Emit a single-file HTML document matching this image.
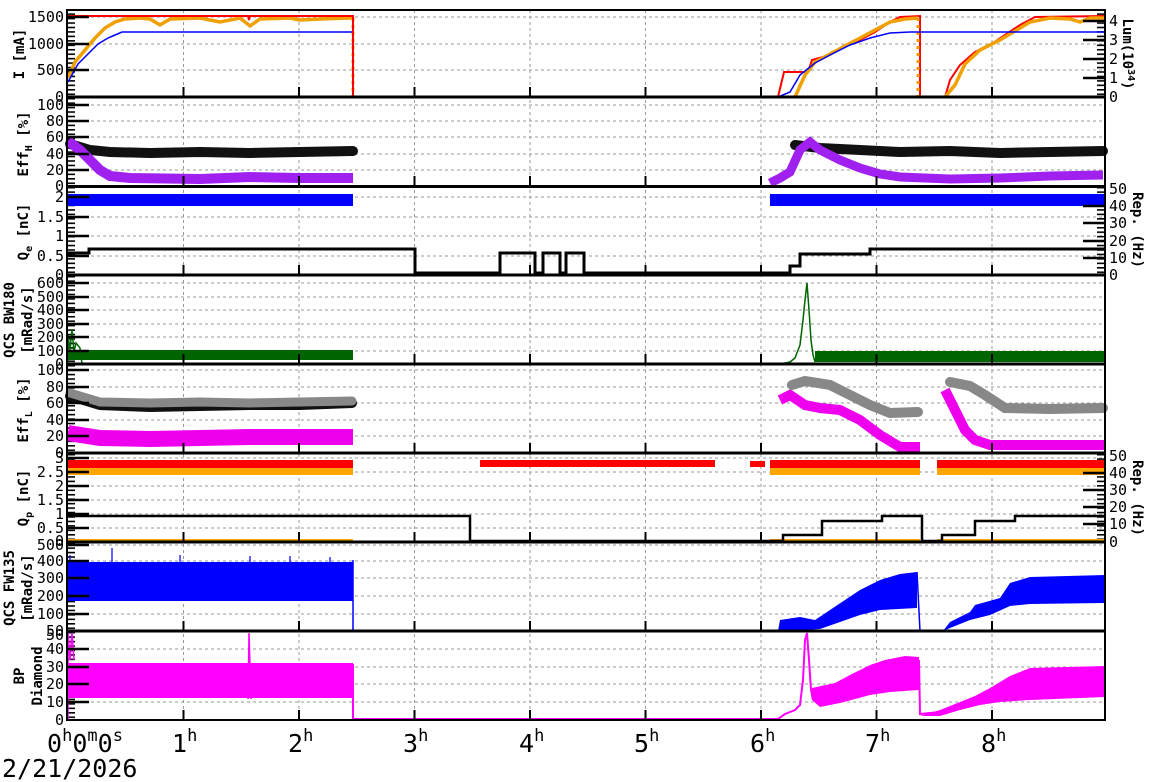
<!DOCTYPE html>
<html><head><meta charset="utf-8"><style>
html,body{margin:0;padding:0;background:#fff;width:1172px;height:782px;overflow:hidden}
svg{display:block}
text{font-family:"DejaVu Sans Mono","Liberation Mono",monospace;fill:#000}
.t{font-size:15px}
.ti{font-size:14px;font-weight:bold}
.b{font-size:25px}
.g{stroke:#999;stroke-width:1;stroke-dasharray:3,3;fill:none}
</style></head><body>
<svg width="1172" height="782" viewBox="0 0 1172 782" xmlns="http://www.w3.org/2000/svg">
<defs>
<pattern id="mt" width="10" height="4.45" patternUnits="userSpaceOnUse"><rect x="0" y="0" width="10" height="1.6" fill="#000"/></pattern>
</defs>
<g class="g">
<path d="M183.5 10V720M299 10V720M414.5 10V720M530 10V720M645.5 10V720M761 10V720M876.5 10V720M992 10V720"/>
<path d="M67 17H1105M67 44H1105M67 70H1105
M67 105H1105M67 121H1105M67 137H1105M67 154H1105M67 170H1105
M67 197H1105M67 217H1105M67 236H1105M67 256H1105
M67 283H1105M67 297H1105M67 310H1105M67 324H1105M67 337H1105M67 351H1105
M67 370H1105M67 387H1105M67 403H1105M67 420H1105M67 436H1105
M67 458H1105M67 472H1105M67 486H1105M67 500H1105M67 514H1105M67 528H1105
M67 545H1105M67 561H1105M67 578H1105M67 596H1105M67 614H1105
M67 649H1105M67 667H1105M67 684H1105M67 702H1105"/>
</g>
<rect x="67" y="10" width="8" height="710" fill="url(#mt)"/>
<rect x="1097" y="10" width="8" height="88" fill="url(#mt)"/>
<rect x="1097" y="186" width="8" height="89" fill="url(#mt)"/>
<rect x="1097" y="453" width="8" height="89" fill="url(#mt)"/>

<!-- PANEL 1 -->
<polyline fill="none" stroke="#f0a000" stroke-width="3.5" points="68,78 75,62 85,50 95,38 105,28 115,22 125,19 140,18 150,19 160,25 170,19 200,18 220,22 240,18 250,26 260,19 290,18 300,20 320,19 350,18 353,18"/>
<line x1="353" y1="18" x2="353" y2="97" stroke="#f0a000" stroke-width="3" stroke-dasharray="3,4"/>
<polyline fill="none" stroke="#00f" stroke-width="1.5" points="68,82 78,64 88,54 98,44 108,38 115,35 122,32 353,32 353,97"/>
<polyline fill="none" stroke="#f00" stroke-width="2" points="68,16 248,16 249,20 250,16 353,16 353,97 778,97 784,72 808,72 812,60 830,55 845,45 860,40 875,32 890,22 900,17 920,16 920,97 945,97 950,80 960,65 975,52 990,45 1005,35 1020,25 1035,17 1105,16"/>
<polyline fill="none" stroke="#f0a000" stroke-width="3.5" points="795,97 805,75 815,62 830,54 845,46 860,38 875,30 890,22 905,19 918,18"/>
<line x1="918" y1="18" x2="918" y2="97" stroke="#f0a000" stroke-width="3" stroke-dasharray="3,4"/>
<polyline fill="none" stroke="#f0a000" stroke-width="3.5" points="945,97 955,85 965,64 980,50 1000,40 1015,31 1030,22 1050,18 1070,19 1080,22 1090,18 1105,18"/>
<polyline fill="none" stroke="#00f" stroke-width="1.5" points="778,97 790,92 800,75 815,63 830,55 850,45 870,38 890,33 910,32 1105,32"/>
<polyline fill="none" stroke="#f00" stroke-width="2" points="353,97 778,97"/>

<!-- PANEL 2 -->
<polyline fill="none" stroke="#111" stroke-width="10" stroke-linecap="round" points="70,144 90,150 110,152 150,153 200,152 250,153 300,152 353,151"/>
<polyline fill="none" stroke="#a020f0" stroke-width="10" points="68,141 80,150 90,160 100,170 110,176 130,178 200,179 250,177 300,178 353,178"/>
<polyline fill="none" stroke="#111" stroke-width="10" stroke-linecap="round" points="795,145 820,148 860,150 900,152 950,151 1000,153 1050,152 1103,151"/>
<polyline fill="none" stroke="#a020f0" stroke-width="9" points="770,183 780,178 790,172 800,150 810,142 820,150 840,160 860,168 880,174 900,177 950,179 1000,178 1050,176 1103,175"/>

<!-- PANEL 3 -->
<rect x="68" y="194" width="285" height="12" fill="#00f"/>
<rect x="770" y="194" width="335" height="12" fill="#00f"/>
<polyline fill="none" stroke="#000" stroke-width="3" points="68,253 89,253 89,249 415,249 415,273 500,273 500,253 535,253 535,273 543,273 543,253 560,253 560,273 566,273 566,253 584,253 584,273 790,273 790,266 800,266 800,254 870,254 870,249 1105,249"/>

<!-- PANEL 4 -->
<polyline fill="none" stroke="#006400" stroke-width="1.5" points="68,364 68,335 70,350 72,330 74,352 76,343 80,348 82,364"/>
<rect x="68" y="350" width="285" height="10" fill="#006400"/>
<polyline fill="none" stroke="#006400" stroke-width="1.5" points="353,364 780,364 790,362 795,358 800,345 803,320 805,300 807,283 809,310 811,340 813,355 815,362"/>
<rect x="815" y="351" width="290" height="11" fill="#006400"/>

<!-- PANEL 5 -->
<polyline fill="none" stroke="#e0e" stroke-width="16" points="68,433 100,438 150,439 200,438 250,437 300,437 353,437"/>
<polyline fill="none" stroke="#111" stroke-width="10" stroke-linecap="round" points="70,396 100,405 150,407 200,406 250,405 300,405 352,403"/>
<polyline fill="none" stroke="#888" stroke-width="9" stroke-linecap="round" points="70,393 100,402 150,403 200,402 250,403 300,402 352,401"/>
<polyline fill="none" stroke="#e0e" stroke-width="10" points="780,400 790,395 805,405 820,408 840,410 860,420 880,435 900,447 920,447"/>
<polyline fill="none" stroke="#888" stroke-width="10" stroke-linecap="round" points="792,385 805,381 830,385 850,395 870,405 890,413 918,412"/>
<polyline fill="none" stroke="#e0e" stroke-width="10" points="945,390 955,410 965,430 975,440 990,445 1050,445 1104,445"/>
<polyline fill="none" stroke="#888" stroke-width="10" stroke-linecap="round" points="950,382 970,386 985,395 1005,408 1050,409 1103,408"/>

<!-- PANEL 6 -->
<rect x="68" y="467" width="285" height="8" fill="#ffa500"/>
<rect x="68" y="460" width="285" height="8" fill="#f00"/>
<rect x="480" y="460" width="235" height="7" fill="#f00"/>
<rect x="750" y="461" width="15" height="6" fill="#f00"/>
<rect x="770" y="467" width="150" height="8" fill="#ffa500"/>
<rect x="770" y="460" width="150" height="8" fill="#f00"/>
<rect x="937" y="467" width="168" height="8" fill="#ffa500"/>
<rect x="937" y="460" width="168" height="8" fill="#f00"/>
<rect x="68" y="539" width="285" height="3" fill="#ffa500"/>
<rect x="770" y="539" width="150" height="3" fill="#ffa500"/>
<rect x="937" y="539" width="168" height="3" fill="#ffa500"/>
<polyline fill="none" stroke="#000" stroke-width="2.5" points="68,516 470,516 470,541 783,541 783,535 822,535 822,521 882,521 882,516 922,516 922,541 942,541 942,535 975,535 975,521 1015,521 1015,516 1105,516"/>

<!-- PANEL 7 -->
<rect x="68" y="562" width="285" height="39" fill="#00f"/>
<path fill="none" stroke="#00f" stroke-width="1.2" d="M70 562V555M112 562V548M180 562V555M250 562V556M330 562V557M290 562V556"/>
<polyline fill="none" stroke="#00f" stroke-width="1.5" points="353,560 353,631 778,631"/>
<polygon fill="#00f" points="778,631 780,620 800,617 815,620 830,610 845,600 860,590 880,580 900,574 917,572 917,608 880,610 860,615 840,622 820,629 790,631"/>
<polyline fill="none" stroke="#00f" stroke-width="1.5" points="917,572 920,631 943,631"/>
<polygon fill="#00f" points="943,631 950,622 970,612 975,605 1000,598 1010,583 1030,577 1105,575 1105,603 1030,604 1010,606 990,615 970,620 955,626"/>

<!-- PANEL 8 -->
<polyline fill="none" stroke="#f0f" stroke-width="1.5" points="68,720 68,633 70,660 72,633 74,660"/>
<rect x="68" y="663" width="285" height="35" fill="#f0f"/>
<polyline fill="none" stroke="#f0f" stroke-width="1.5" points="248,699 249,633 251,699"/>
<polyline fill="none" stroke="#f0f" stroke-width="2" points="353,664 353,719 778,719 785,714 795,710 800,705 803,680 805,640 807,633 809,660 811,690 813,700"/>
<polygon fill="#f0f" points="812,700 812,688 835,683 850,675 870,665 885,660 905,656 919,657 919,690 890,692 870,695 840,703 820,707"/>
<polyline fill="none" stroke="#f0f" stroke-width="2" points="919,660 920,714 940,712"/>
<polygon fill="#f0f" points="920,716 940,710 960,702 975,696 990,688 1010,676 1030,668 1105,666 1105,697 1030,700 1000,702 980,705 960,710 940,716"/>

<g fill="none" stroke="#000" stroke-width="2">
<rect x="67" y="10" width="1038" height="710"/>
</g>
<g stroke="#000" stroke-width="3">
<path d="M67 97H1105M67 186.5H1105M67 275H1105M67 364H1105M67 453H1105M67 542H1105M67 631H1105"/>
</g>
<g stroke="#000" stroke-width="2.5">
<path d="M67 17h22M67 44h22M67 70h22M67 105h22M67 121h22M67 137h22M67 154h22M67 170h22M67 197h22M67 217h22M67 236h22M67 256h22M67 283h22M67 297h22M67 310h22M67 324h22M67 337h22M67 351h22M67 370h22M67 387h22M67 403h22M67 420h22M67 436h22M67 458h22M67 472h22M67 486h22M67 500h22M67 514h22M67 528h22M67 545h22M67 561h22M67 578h22M67 596h22M67 614h22M67 649h22M67 667h22M67 684h22M67 702h22"/>
<path d="M1105 21h-22M1105 40h-22M1105 59h-22M1105 78h-22M1105 206h-22M1105 223h-22M1105 241h-22M1105 258h-22M1105 473h-22M1105 490h-22M1105 507h-22M1105 524h-22"/>
</g>
<g stroke="#000" stroke-width="2">
<path d="M183.5 97v-10M299 97v-10M414.5 97v-10M530 97v-10M645.5 97v-10M761 97v-10M876.5 97v-10M992 97v-10
M183.5 186v-10M299 186v-10M414.5 186v-10M530 186v-10M645.5 186v-10M761 186v-10M876.5 186v-10M992 186v-10
M183.5 275v-10M299 275v-10M414.5 275v-10M530 275v-10M645.5 275v-10M761 275v-10M876.5 275v-10M992 275v-10
M183.5 364v-10M299 364v-10M414.5 364v-10M530 364v-10M645.5 364v-10M761 364v-10M876.5 364v-10M992 364v-10
M183.5 453v-10M299 453v-10M414.5 453v-10M530 453v-10M645.5 453v-10M761 453v-10M876.5 453v-10M992 453v-10
M183.5 542v-10M299 542v-10M414.5 542v-10M530 542v-10M645.5 542v-10M761 542v-10M876.5 542v-10M992 542v-10
M183.5 631v-10M299 631v-10M414.5 631v-10M530 631v-10M645.5 631v-10M761 631v-10M876.5 631v-10M992 631v-10
M183.5 720v-10M299 720v-10M414.5 720v-10M530 720v-10M645.5 720v-10M761 720v-10M876.5 720v-10M992 720v-10"/>
</g>

<g class="t" text-anchor="end">
<text x="64" y="22">1500</text><text x="64" y="49">1000</text><text x="64" y="75">500</text><text x="64" y="102">0</text>
<text x="64" y="110">100</text><text x="64" y="126">80</text><text x="64" y="142">60</text><text x="64" y="159">40</text><text x="64" y="175">20</text><text x="64" y="191">0</text>
<text x="64" y="202">2</text><text x="64" y="222">1.5</text><text x="64" y="241">1</text><text x="64" y="261">0.5</text><text x="64" y="280">0</text>
<text x="64" y="288">600</text><text x="64" y="302">500</text><text x="64" y="315">400</text><text x="64" y="329">300</text><text x="64" y="342">200</text><text x="64" y="356">100</text><text x="64" y="369">0</text>
<text x="64" y="375">100</text><text x="64" y="392">80</text><text x="64" y="408">60</text><text x="64" y="425">40</text><text x="64" y="441">20</text><text x="64" y="458">0</text>
<text x="64" y="463">3</text><text x="64" y="477">2.5</text><text x="64" y="491">2</text><text x="64" y="505">1.5</text><text x="64" y="519">1</text><text x="64" y="533">0.5</text><text x="64" y="546">0</text>
<text x="64" y="550">500</text><text x="64" y="566">400</text><text x="64" y="583">300</text><text x="64" y="601">200</text><text x="64" y="619">100</text><text x="64" y="636">50</text>
<text x="64" y="640">50</text><text x="64" y="654">40</text><text x="64" y="672">30</text><text x="64" y="689">20</text><text x="64" y="707">10</text><text x="64" y="725">0</text>
</g>
<g class="t">
<text x="1109" y="26">4</text><text x="1109" y="45">3</text><text x="1109" y="64">2</text><text x="1109" y="83">1</text><text x="1109" y="102">0</text>
<text x="1109" y="194">50</text><text x="1109" y="211">40</text><text x="1109" y="228">30</text><text x="1109" y="246">20</text><text x="1109" y="263">10</text><text x="1109" y="280">0</text>
<text x="1109" y="461">50</text><text x="1109" y="478">40</text><text x="1109" y="495">30</text><text x="1109" y="512">20</text><text x="1109" y="529">10</text><text x="1109" y="547">0</text>
</g>
<g class="ti" text-anchor="middle">
<text transform="translate(24,54) rotate(-90)">I [mA]</text>
<text transform="translate(28,144) rotate(-90)">Eff<tspan font-size="10" dy="4">H</tspan><tspan dy="-4"> [%]</tspan></text>
<text transform="translate(28,232) rotate(-90)">Q<tspan font-size="10" dy="4">e</tspan><tspan dy="-4"> [nC]</tspan></text>
<text transform="translate(14,320) rotate(-90)">QCS BW180</text>
<text transform="translate(32,320) rotate(-90)">[mRad/s]</text>
<text transform="translate(28,410) rotate(-90)">Eff<tspan font-size="10" dy="4">L</tspan><tspan dy="-4"> [%]</tspan></text>
<text transform="translate(28,498) rotate(-90)">Q<tspan font-size="10" dy="4">p</tspan><tspan dy="-4"> [nC]</tspan></text>
<text transform="translate(14,588) rotate(-90)">QCS FW135</text>
<text transform="translate(32,588) rotate(-90)">[mRad/s]</text>
<text transform="translate(24,676) rotate(-90)">BP</text>
<text transform="translate(42,676) rotate(-90)">Diamond</text>
<text transform="translate(1123,54) rotate(90)">Lum(10<tspan font-size="10" dy="-5">34</tspan><tspan dy="5">)</tspan></text>
<text transform="translate(1133,230) rotate(90)">Rep. (Hz)</text>
<text transform="translate(1133,498) rotate(90)">Rep. (Hz)</text>
</g>
<g class="b">
<text x="47" y="752">0<tspan font-size="17" dy="-11">h</tspan><tspan dy="11">0</tspan><tspan font-size="17" dy="-11">m</tspan><tspan dy="11">0</tspan><tspan font-size="17" dy="-11">s</tspan></text>
<text x="172" y="752">1<tspan font-size="17" dy="-11">h</tspan></text>
<text x="288" y="752">2<tspan font-size="17" dy="-11">h</tspan></text>
<text x="403" y="752">3<tspan font-size="17" dy="-11">h</tspan></text>
<text x="519" y="752">4<tspan font-size="17" dy="-11">h</tspan></text>
<text x="634" y="752">5<tspan font-size="17" dy="-11">h</tspan></text>
<text x="750" y="752">6<tspan font-size="17" dy="-11">h</tspan></text>
<text x="865" y="752">7<tspan font-size="17" dy="-11">h</tspan></text>
<text x="981" y="752">8<tspan font-size="17" dy="-11">h</tspan></text>
<text x="2" y="777">2/21/2026</text>
</g>
</svg>
</body></html>
